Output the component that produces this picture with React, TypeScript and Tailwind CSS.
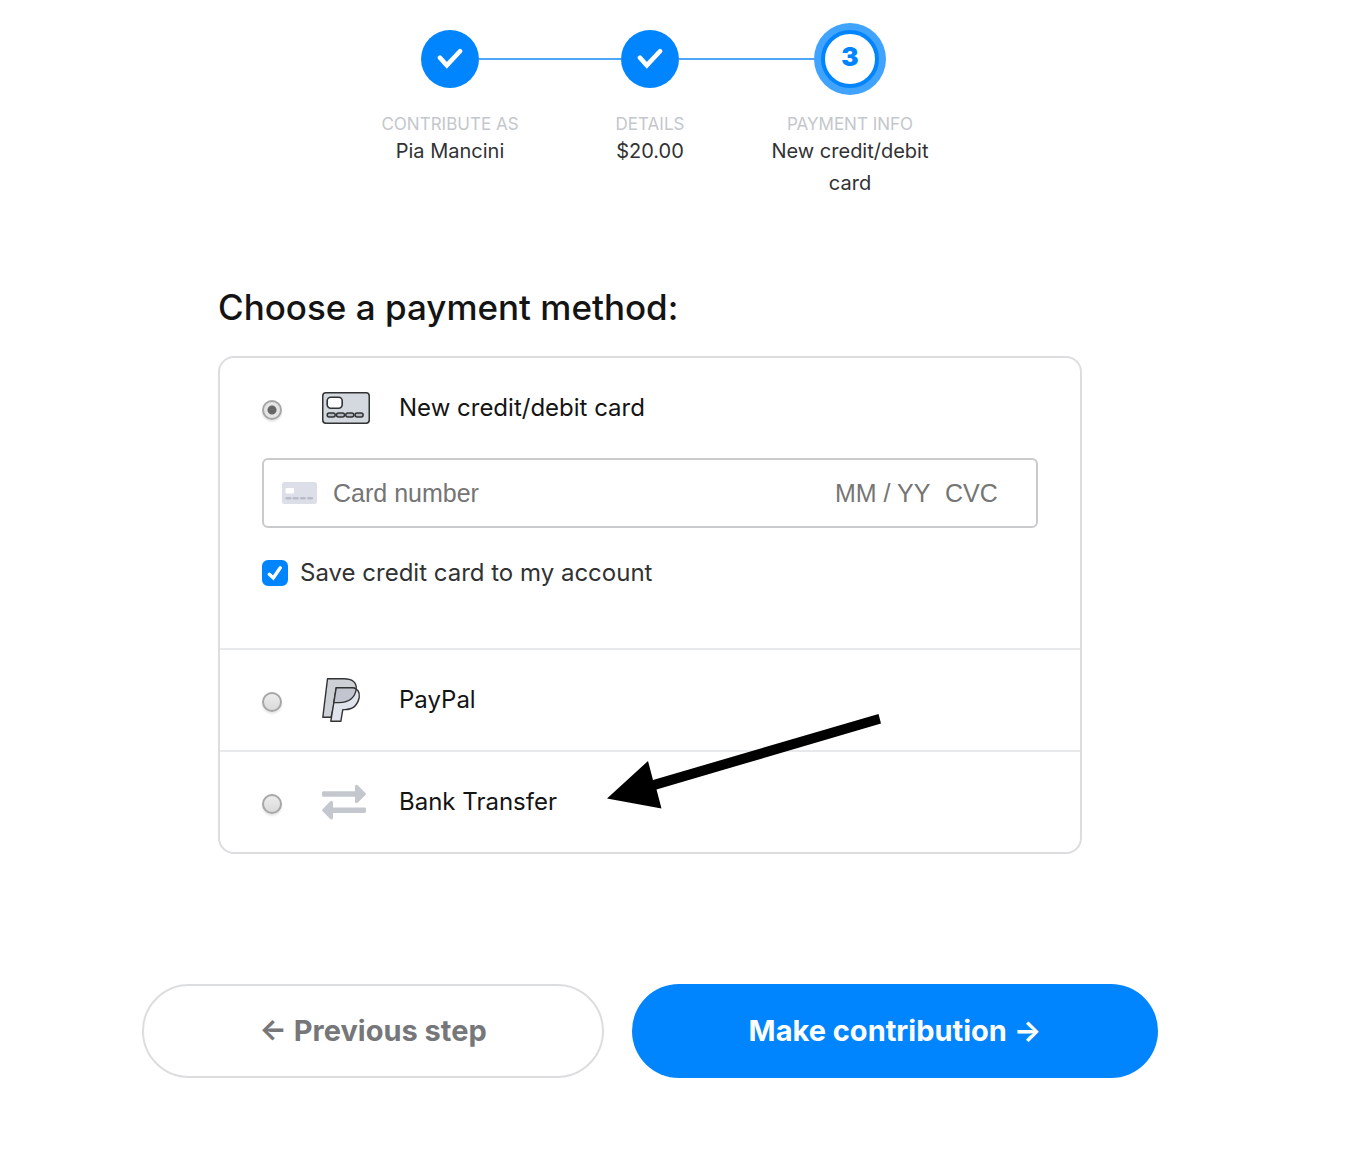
import { useState } from "react";
import type { ReactNode } from "react";

function StepCheck() {
  return (
    <svg width="26" height="22" viewBox="0 0 26 22" fill="none" aria-hidden="true">
      <path d="M3 9.8 L9.8 17.4 L23 3.2" stroke="#fff" strokeWidth="4.6" strokeLinecap="round" />
    </svg>
  );
}

function CardIcon() {
  return (
    <svg width="48" height="32" viewBox="0 0 48 32" aria-hidden="true">
      <rect x="0.75" y="0.75" width="46.5" height="30.5" rx="3.2" fill="#d4d8df" stroke="#313233" strokeWidth="1.5" />
      <rect x="5.2" y="5.2" width="15" height="11" rx="3.6" fill="#fff" stroke="#313233" strokeWidth="1.6" />
      {[5.2, 14.5, 23.8, 33.1].map((x) => (
        <rect key={x} x={x} y="21" width="8" height="4" rx="2" fill="#b4b8c0" stroke="#313233" strokeWidth="1.5" />
      ))}
    </svg>
  );
}

function PayPalIcon() {
  return (
    <svg width="40" height="44" viewBox="0 0 40 44" strokeWidth="1.4" stroke="#313233" strokeLinejoin="round" aria-hidden="true">
      <path d="M5.5 0.8 H22 C30 0.8 34.5 4 34.3 10.5 C33.5 20 27 24.3 17 24.6 H12.5 L9 39.3 H0.8 Z" fill="#cdd0d5" />
      <path d="M14.2 9.8 H30 C35.5 10.3 38.2 14 37.2 19.5 C35.5 27.5 30.5 31.6 23 31.6 H20.8 L18.8 43.3 H8.8 Z" fill="#dfe3eb" />
      <path d="M14.2 9.8 H30 C31.6 9.8 33 10.2 34.2 11 C33 20 27 24.3 17 24.6 H11.8 Z" fill="#c2c5cf" />
    </svg>
  );
}

function TransferIcon() {
  return (
    <svg width="44" height="36" viewBox="0 0 44 36" fill="#c4c8ce" aria-hidden="true">
      <path d="M1.5 7.3 H33 V2.5 C33 0.6 34.8 0.2 36 1.4 L43.2 8.7 C44.2 9.6 44.2 10.4 43.2 11.3 L36 18.6 C34.8 19.8 33 19.4 33 17.5 V12.7 H1.5 C0.6 12.7 0 12.1 0 11.2 V8.8 C0 7.9 0.6 7.3 1.5 7.3 Z" />
      <path d="M42.5 23.5 H11 V18.7 C11 16.8 9.2 16.4 8 17.6 L0.8 24.9 C-0.2 25.8 -0.2 26.6 0.8 27.5 L8 34.8 C9.2 36 11 35.6 11 33.7 V28.9 H42.5 C43.4 28.9 44 28.3 44 27.4 V25 C44 24.1 43.4 23.5 42.5 23.5 Z" />
    </svg>
  );
}

function FieldCardIcon() {
  return (
    <svg width="35" height="22" viewBox="0 0 35 22" className="shrink-0" aria-hidden="true">
      <rect width="35" height="22" rx="2.5" fill="#dcdfe7" />
      <rect x="3.5" y="6" width="8.5" height="5.6" rx="1" fill="#fff" />
      {[3.5, 10.7, 17.9, 25.1].map((x) => (
        <rect key={x} x={x} y="15" width="6" height="2.6" rx="1.3" fill="#b9bdca" />
      ))}
    </svg>
  );
}

const steps = [
  { label: "CONTRIBUTE AS", value: "Pia Mancini" },
  { label: "DETAILS", value: "$20.00" },
  { label: "PAYMENT INFO", value: "New credit/debit card" },
];

function Steps() {
  return (
    <ol className="mx-auto flex w-full max-w-[600px]">
      {steps.map((s, i) => (
        <li key={s.label} className="flex flex-1 flex-col items-center text-center">
          <div className="grid w-full grid-cols-[1fr_auto_1fr] items-center">
            <span className={i > 0 ? "h-[2px] bg-[#4da6fa]" : "h-[2px]"} />
            {i < 2 ? (
              <span className="flex size-[58px] items-center justify-center rounded-full bg-[#0085ff]">
                <StepCheck />
              </span>
            ) : (
              <span className="flex size-[58px] items-center justify-center rounded-full border-4 border-[#0085ff] bg-white pb-1 text-[26px] leading-8 font-black text-[#0085ff] shadow-[0_0_0_7px_#40a4ff]">
                3
              </span>
            )}
            <span className={i < 2 ? "h-[2px] bg-[#4da6fa]" : "h-[2px]"} />
          </div>
          <span className="mt-[25px] text-[17px] leading-[22px] text-[#c4c7cc]">{s.label}</span>
          <span className="max-w-[172px] text-[20px] leading-8 text-[#313233]">{s.value}</span>
        </li>
      ))}
    </ol>
  );
}

type MethodProps = {
  id: string;
  label: string;
  icon: ReactNode;
  selected: string;
  onSelect: (id: string) => void;
};

function MethodHeader({ id, label, icon, selected, onSelect }: MethodProps) {
  return (
    <label htmlFor={id} className="flex h-[100px] cursor-pointer items-center">
      <input
        id={id}
        type="radio"
        name="payment-method"
        checked={selected === id}
        onChange={() => onSelect(id)}
        className="mt-1 size-5 shrink-0 appearance-none rounded-full border-2 border-[#a6a6a6] bg-linear-to-b from-[#ececec] to-[#dadada] shadow-[0_2px_2px_#e6e6e6] checked:bg-[radial-gradient(circle,#666_4px,#e4e4e4_5px)]"
      />
      <span className="ml-10 flex w-[77px] shrink-0">{icon}</span>
      <span className="text-[24px] leading-9 text-[#141415]">{label}</span>
    </label>
  );
}

export default function App() {
  const [method, setMethod] = useState("card");
  const [save, setSave] = useState(true);

  return (
    <main className="bg-white pt-[30px] pr-[60px] pb-24 font-['Inter',sans-serif]">
      <Steps />

      <section className="mx-auto mt-[87px] max-w-[864px]">
        <h1 className="text-[35px] leading-[42px] font-medium text-[#141415]">Choose a payment method:</h1>
        <ul className="mt-7 rounded-2xl border-2 border-[#dcdddf]">
          <li className="border-b-2 border-[#e8e9eb] px-[42px] pb-[58px]">
            <MethodHeader id="card" label="New credit/debit card" icon={<CardIcon />} selected={method} onSelect={setMethod} />
            <div className="flex h-[70px] items-center rounded-md border-2 border-[#c9cacc] pr-6 pl-[18px] font-['Liberation_Sans',sans-serif] text-[25px]">
              <FieldCardIcon />
              <input aria-label="Card number" placeholder="Card number" className="ml-4 min-w-0 flex-1 pt-0.5 outline-none placeholder:text-[#757575]" />
              <input aria-label="Expiry date" placeholder="MM / YY" className="w-[110px] pt-0.5 outline-none placeholder:text-[#757575]" />
              <input aria-label="Security code" placeholder="CVC" className="w-[67px] pt-0.5 outline-none placeholder:text-[#757575]" />
            </div>
            <label htmlFor="save-card" className="mt-7 flex cursor-pointer items-center">
              <span className="relative flex size-[26px] shrink-0">
                <input
                  id="save-card"
                  type="checkbox"
                  checked={save}
                  onChange={(e) => setSave(e.target.checked)}
                  className="size-[26px] appearance-none rounded-md border-2 border-[#c4c7cc] checked:border-[#0085ff] checked:bg-[#0085ff]"
                />
                {save && (
                  <svg width="26" height="26" viewBox="0 0 26 26" fill="none" className="pointer-events-none absolute inset-0" aria-hidden="true">
                    <path d="M7.3 14.3 L11.3 18 L18.3 7.8" stroke="#fff" strokeWidth="3.4" strokeLinecap="round" />
                  </svg>
                )}
              </span>
              <span className="ml-3 text-[24px] leading-[34px] text-[#313233]">Save credit card to my account</span>
            </label>
          </li>
          <li className="border-b-2 border-[#e8e9eb] px-[42px]">
            <MethodHeader id="paypal" label="PayPal" icon={<PayPalIcon />} selected={method} onSelect={setMethod} />
          </li>
          <li className="relative px-[42px]">
            <MethodHeader id="bank" label="Bank Transfer" icon={<TransferIcon />} selected={method} onSelect={setMethod} />
            <svg
              width="276"
              height="98"
              viewBox="0 0 276 98"
              className="pointer-events-none absolute -top-10 left-[386px]"
              aria-hidden="true"
            >
              <path d="M1 86.5 L42 49 L47 68 L272.5 2 L275 11.5 L50.5 77.5 L55.5 96.5 Z" fill="#000" />
            </svg>
          </li>
        </ul>
      </section>

      <div className="mx-auto mt-[130px] flex max-w-[1016px] gap-7">
        <button type="button" className="h-[94px] flex-[458] rounded-full border-2 border-[#dcdddf] text-[29px] leading-9 font-bold text-[#76777a]">
          ← Previous step
        </button>
        <button type="button" className="h-[94px] flex-[526] rounded-full bg-[#0085ff] text-[29px] leading-9 font-bold text-white">
          Make contribution →
        </button>
      </div>
    </main>
  );
}
